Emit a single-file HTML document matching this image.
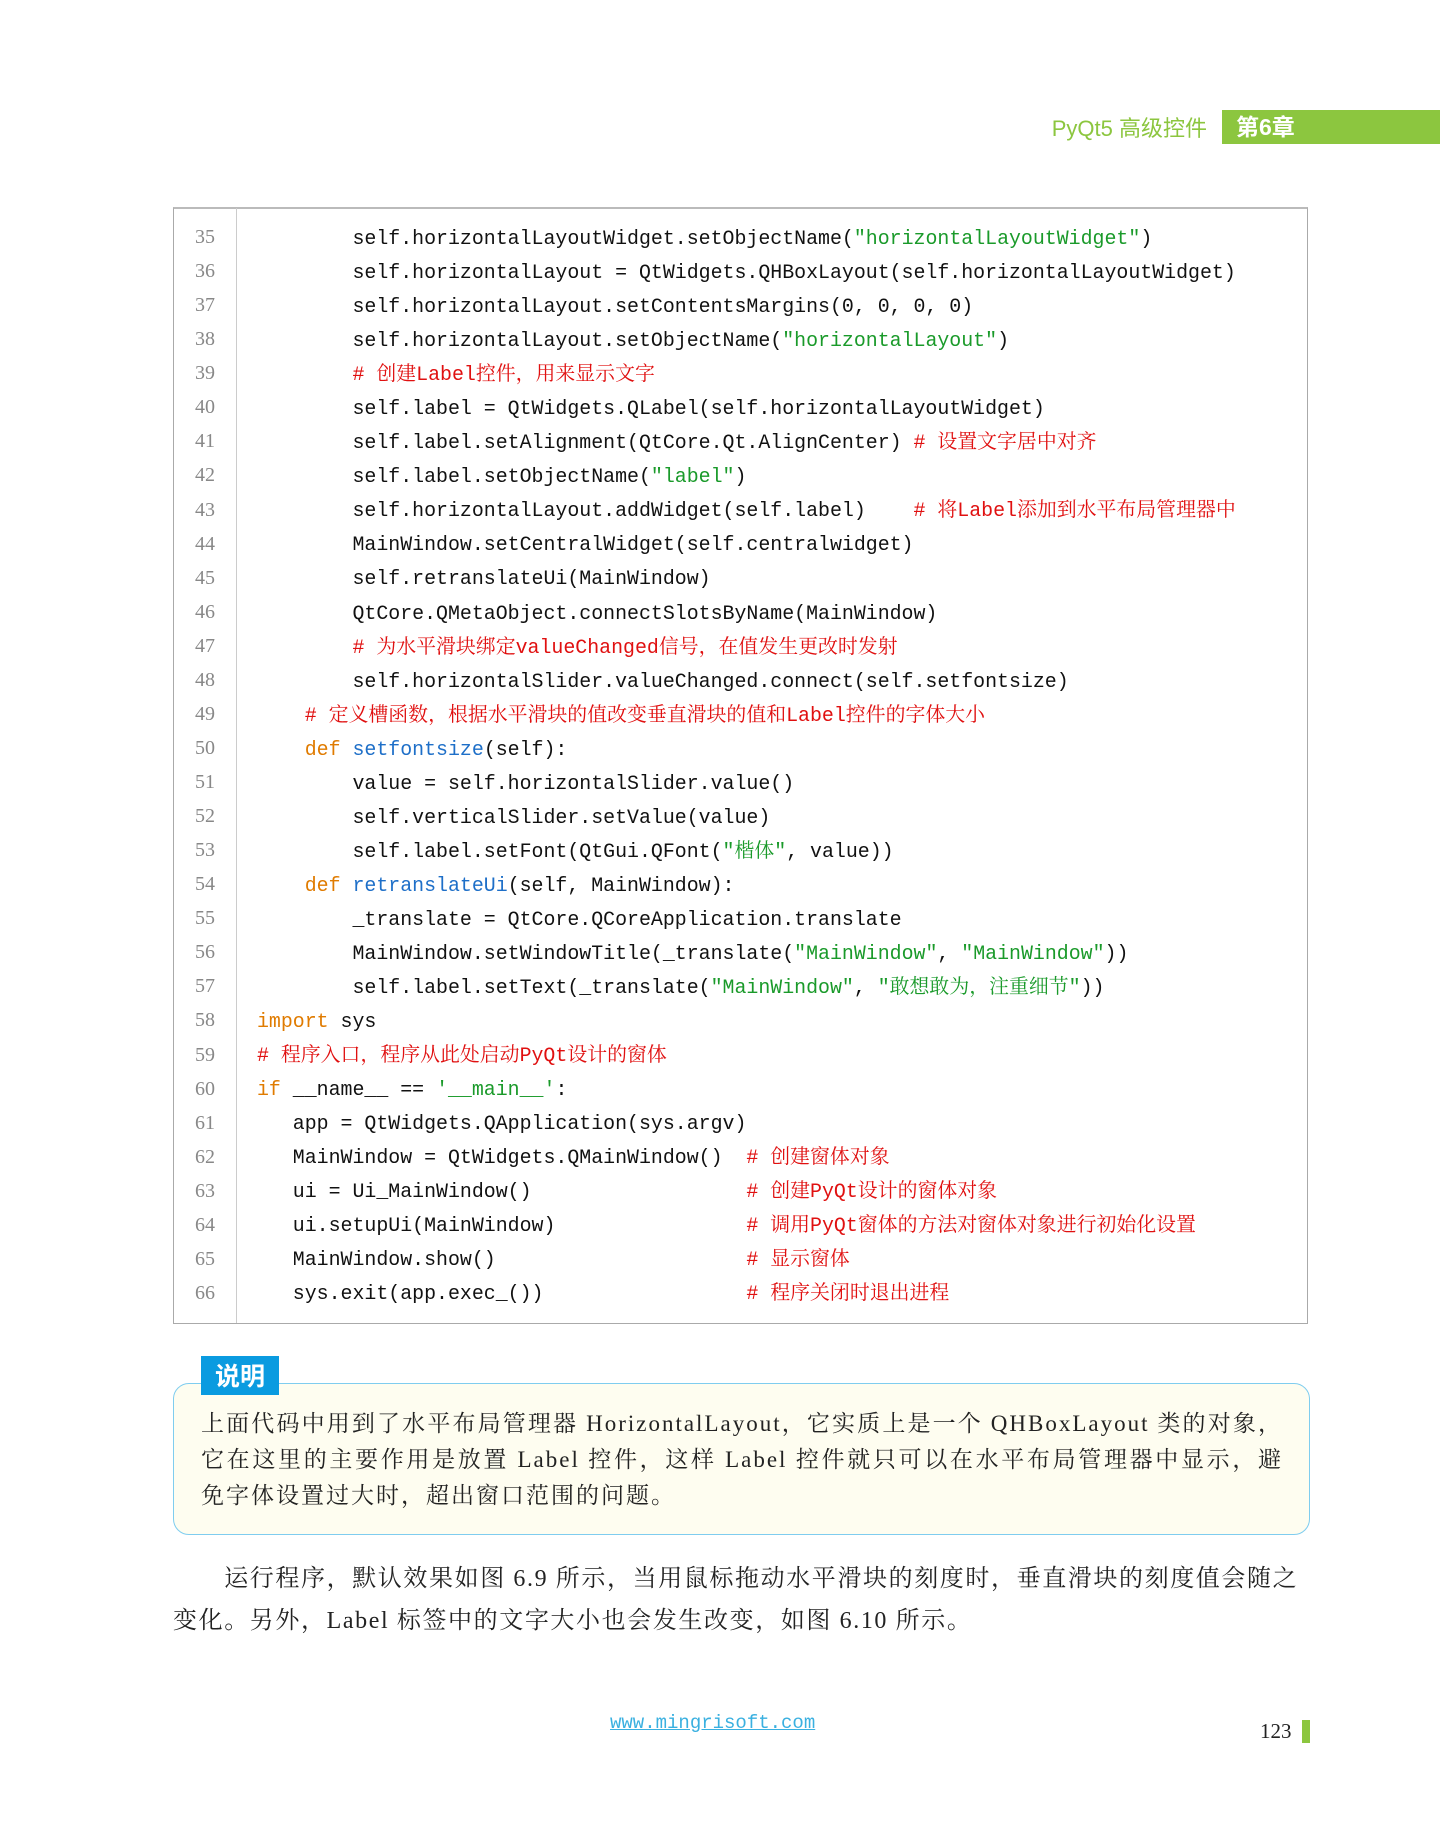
<!DOCTYPE html>
<html><head><meta charset="utf-8"><style>
body{margin:0;width:1440px;height:1833px;background:#fff;position:relative;overflow:hidden;font-family:"Liberation Serif","Noto Serif CJK SC",serif}
.hdr{position:absolute;right:233px;top:111px;color:#8cc63f;font:22px "Liberation Sans","Noto Sans CJK SC",sans-serif}
.bar{position:absolute;left:1222px;top:110px;width:218px;height:34px;background:#8cc63f;color:#fff;font:bold 23px "Liberation Sans","Noto Sans CJK SC",sans-serif;padding-left:14px;box-sizing:border-box;line-height:34px}
.box{position:absolute;left:173px;top:207px;width:1135px;height:1117px;border:1px solid #aaa;box-sizing:border-box;border-top:2px solid #bbb}
.gut{position:absolute;left:236px;top:208px;width:1px;height:1115px;background:#ccc}
.code{position:absolute;left:257px;top:222px;font-family:"Liberation Mono","Noto Sans CJK SC",monospace;font-size:19.9px;color:#111}
.code div{height:34.06px;line-height:34.06px;overflow:visible;white-space:pre}
.ln{position:absolute;left:180px;top:220px;width:50px;text-align:center;font:20px/34.06px "Liberation Serif",serif;color:#888;white-space:pre}
.k{color:#e07b00}.f{color:#1e6fc8}.s{color:#1a9a2a}.r{color:#e01010}
i{font-style:normal;font-family:"Noto Serif CJK SC",serif;line-height:1}
.note{position:absolute;left:173px;top:1383px;width:1137px;height:152px;border:1.5px solid #7fcdef;border-radius:16px;background:#fefdf0;box-sizing:border-box}
.lab{position:absolute;left:201px;top:1356px;width:78px;height:39px;background:#0a9be0;color:#fff;font:bold 25px/39px "Noto Sans CJK SC",sans-serif;text-align:center}
.nt{position:absolute;left:201px;top:1406px;width:1082px;font-size:23px;line-height:36px;color:#222;letter-spacing:2px}
.nt div{white-space:nowrap}
.nt .j{text-align:justify;text-align-last:justify;white-space:normal}
.p{position:absolute;left:173px;top:1558px;width:1142px;font-size:24px;line-height:42px;color:#222;letter-spacing:1.6px}
.url{position:absolute;left:610px;top:1712px;color:#3ab0e0;font:19px "Liberation Mono",monospace;text-decoration:underline}
.pn{position:absolute;left:1260px;top:1719px;font-size:21px;color:#222}
.gb{position:absolute;left:1302px;top:1720px;width:8px;height:23px;background:#8cc63f}
</style></head><body>
<div class="hdr">PyQt5 高级控件</div>
<div class="bar">第6章</div>
<div class="box"></div><div class="gut"></div>
<div class="ln">35
36
37
38
39
40
41
42
43
44
45
46
47
48
49
50
51
52
53
54
55
56
57
58
59
60
61
62
63
64
65
66</div>
<div class="code"><div>        self.horizontalLayoutWidget.setObjectName(<span class="s">"horizontalLayoutWidget"</span>)</div><div>        self.horizontalLayout = QtWidgets.QHBoxLayout(self.horizontalLayoutWidget)</div><div>        self.horizontalLayout.setContentsMargins(0, 0, 0, 0)</div><div>        self.horizontalLayout.setObjectName(<span class="s">"horizontalLayout"</span>)</div><div>        <span class="r"># <i>创建</i>Label<i>控件，用来显示文字</i></span></div><div>        self.label = QtWidgets.QLabel(self.horizontalLayoutWidget)</div><div>        self.label.setAlignment(QtCore.Qt.AlignCenter) <span class="r"># <i>设置文字居中对齐</i></span></div><div>        self.label.setObjectName(<span class="s">"label"</span>)</div><div>        self.horizontalLayout.addWidget(self.label)    <span class="r"># <i>将</i>Label<i>添加到水平布局管理器中</i></span></div><div>        MainWindow.setCentralWidget(self.centralwidget)</div><div>        self.retranslateUi(MainWindow)</div><div>        QtCore.QMetaObject.connectSlotsByName(MainWindow)</div><div>        <span class="r"># <i>为水平滑块绑定</i>valueChanged<i>信号，在值发生更改时发射</i></span></div><div>        self.horizontalSlider.valueChanged.connect(self.setfontsize)</div><div>    <span class="r"># <i>定义槽函数，根据水平滑块的值改变垂直滑块的值和</i>Label<i>控件的字体大小</i></span></div><div>    <span class="k">def</span> <span class="f">setfontsize</span>(self):</div><div>        value = self.horizontalSlider.value()</div><div>        self.verticalSlider.setValue(value)</div><div>        self.label.setFont(QtGui.QFont(<span class="s">"<i>楷体</i>"</span>, value))</div><div>    <span class="k">def</span> <span class="f">retranslateUi</span>(self, MainWindow):</div><div>        _translate = QtCore.QCoreApplication.translate</div><div>        MainWindow.setWindowTitle(_translate(<span class="s">"MainWindow"</span>, <span class="s">"MainWindow"</span>))</div><div>        self.label.setText(_translate(<span class="s">"MainWindow"</span>, <span class="s">"<i>敢想敢为，注重细节</i>"</span>))</div><div><span class="k">import</span> sys</div><div><span class="r"># <i>程序入口，程序从此处启动</i>PyQt<i>设计的窗体</i></span></div><div><span class="k">if</span> __name__ == <span class="s">'__main__'</span>:</div><div>   app = QtWidgets.QApplication(sys.argv)</div><div>   MainWindow = QtWidgets.QMainWindow()  <span class="r"># <i>创建窗体对象</i></span></div><div>   ui = Ui_MainWindow()                  <span class="r"># <i>创建</i>PyQt<i>设计的窗体对象</i></span></div><div>   ui.setupUi(MainWindow)                <span class="r"># <i>调用</i>PyQt<i>窗体的方法对窗体对象进行初始化设置</i></span></div><div>   MainWindow.show()                     <span class="r"># <i>显示窗体</i></span></div><div>   sys.exit(app.exec_())                 <span class="r"># <i>程序关闭时退出进程</i></span></div></div>
<div class="note"></div>
<div class="lab">说明</div>
<div class="nt"><div class="j">上面代码中用到了水平布局管理器 HorizontalLayout，它实质上是一个 QHBoxLayout 类的对象，</div><div class="j">它在这里的主要作用是放置 Label 控件，这样 Label 控件就只可以在水平布局管理器中显示，避</div><div>免字体设置过大时，超出窗口范围的问题。</div></div>
<div class="p">&emsp;&emsp;运行程序，默认效果如图 6.9 所示，当用鼠标拖动水平滑块的刻度时，垂直滑块的刻度值会随之变化。另外，Label 标签中的文字大小也会发生改变，如图 6.10 所示。</div>
<div class="url">www.mingrisoft.com</div>
<div class="pn">123</div><div class="gb"></div>
</body></html>
